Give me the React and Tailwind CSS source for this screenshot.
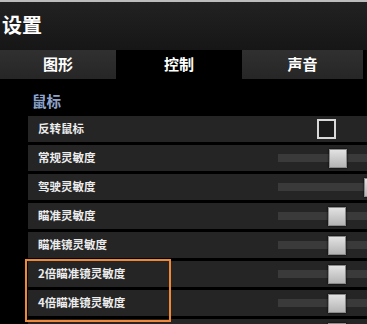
import React from "react";

const rows = [
    { label: "反转鼠标", type: "check" },
    { label: "常规灵敏度", type: "slider", pos: 51 },
    { label: "驾驶灵敏度", type: "slider", pos: 86 },
    { label: "瞄准灵敏度", type: "slider", pos: 50 },
    { label: "瞄准镜灵敏度", type: "slider", pos: 50 },
    { label: "2倍瞄准镜灵敏度", type: "slider", pos: 50 },
    { label: "4倍瞄准镜灵敏度", type: "slider", pos: 50 },
    { label: "", type: "slider", pos: 50 },
];

function Slider({ pos }) {
    return (
        <div className="relative w-[130px] h-[8px] bg-[#3a3a3a] shrink-0">
            <div
                className="absolute top-[-5px] w-[18px] h-[19px] bg-gradient-to-b from-[#e2e2e2] to-[#b4b4b4] border border-[#8a8a8a] shadow-[0_0_2px_#000]"
                style={{ left: pos }}
            />
        </div>
    );
}

export default function App() {
    return (
        <div
            className="w-[367px] h-[324px] bg-black overflow-hidden text-white"
            style={{ fontFamily: '"Noto Sans CJK SC", "Noto Sans", sans-serif' }}
        >
            <div className="h-[2px] bg-[#bdbdbd]" />
            <div className="h-[48px] bg-gradient-to-b from-[#222] to-[#161616] flex items-center pl-[2px]">
                <span className="text-[20px] font-bold leading-none mt-[-2px]">设置</span>
            </div>
            <div className="flex h-[29px] text-[15px] font-bold">
                <div className="w-[116px] bg-gradient-to-b from-[#303030] to-[#262626] flex items-center justify-center">图形</div>
                <div className="w-[126px] bg-black flex items-center justify-center">控制</div>
                <div className="w-[121px] bg-gradient-to-b from-[#303030] to-[#262626] flex items-center justify-center">声音</div>
            </div>
            <div className="relative pl-[28px] pt-[11px]">
                <div className="pl-[4px] h-[21px] mb-[5px] text-[14.5px] font-bold text-[#8ea4cf] leading-[21px]">
                    鼠标
                </div>
                <div className="flex flex-col gap-[3px]">
                    {rows.map((r, i) => (
                        <div key={i} className="h-[26px] shrink-0 bg-[#252525] flex items-center">
                            <span className="pl-[10px] w-[250px] shrink-0 text-[11.5px] font-bold text-[#ececec]">
                                {r.label}
                            </span>
                            {r.type === "check" ? (
                                <div className="ml-[39px] w-[19px] h-[20px] shrink-0 border-2 border-[#d8d8d8] bg-[#1a1a1a]" />
                            ) : (
                                <Slider pos={r.pos} />
                            )}
                        </div>
                    ))}
                </div>
                <div className="absolute left-[25px] top-[180px] w-[146px] h-[63px] border-2 border-[#f0883a] pointer-events-none" />
            </div>
        </div>
    );
}
